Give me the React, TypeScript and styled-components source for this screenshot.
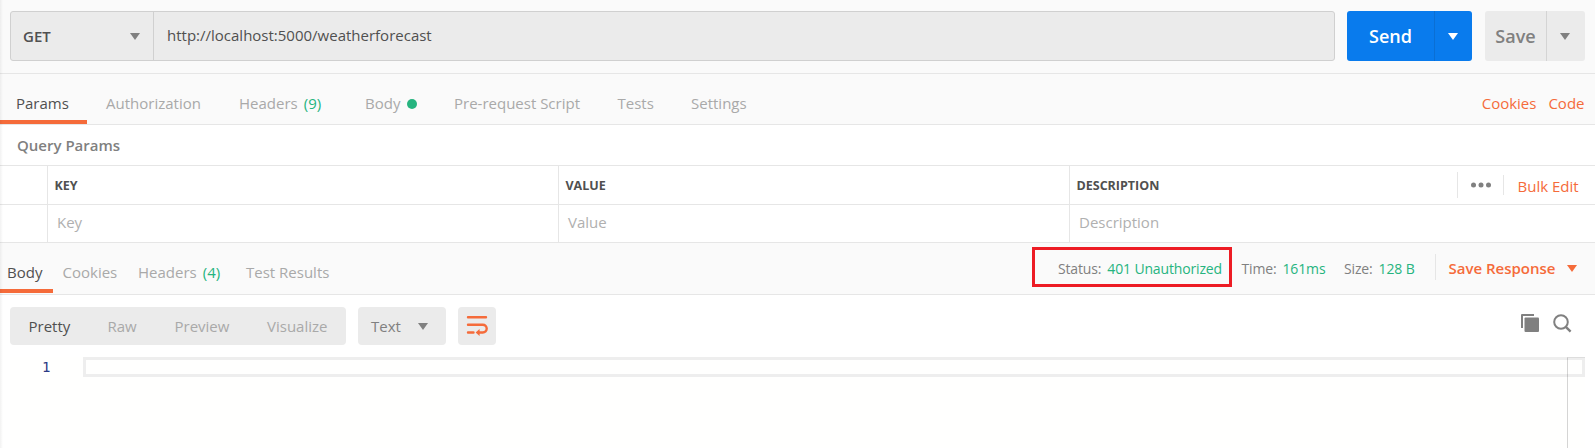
import React from "react";
import styled, { createGlobalStyle, css } from "styled-components";

const GlobalStyle = createGlobalStyle`
  *, *::before, *::after { box-sizing: border-box; }
  html, body { margin: 0; height: 100%; }
  body {
    overflow: hidden;
    background: #fff;
    color: #505050;
    font-family: "Open Sans", "Noto Sans", sans-serif;
    font-size: 15px;
  }
`;

const Page = styled.main`
  position: relative;
  display: flex;
  flex-direction: column;
  width: 1595px;
  height: 448px;
  overflow: hidden;
  white-space: nowrap;
`;

const EdgeShadow = styled.div`
  position: absolute;
  inset: 0 auto 0 0;
  width: 3px;
  background: linear-gradient(to right, rgba(0, 0, 0, 0.05), transparent);
  pointer-events: none;
`;

const RequestBar = styled.header`
  display: flex;
  height: 74px;
  padding: 11px 10px 0;
  background: #fafafa;
  border-bottom: 1px solid #e6e6e6;
`;

const UrlGroup = styled.div`
  display: flex;
  width: 1325px;
  height: 50px;
  margin-right: 12px;
  background: #ebebeb;
  border: 1px solid #d0d0d0;
  border-radius: 3px;
`;

const MethodSelect = styled.div`
  display: flex;
  align-items: center;
  justify-content: space-between;
  width: 143px;
  padding: 0 13px 0 12px;
  border-right: 1px solid #d0d0d0;
  font-weight: 600;
`;

const UrlField = styled.div`
  padding-left: 13px;
  line-height: 47px;
`;

const Caret = styled.svg`
  display: block;
  flex: none;
  width: 10px;
  height: 7px;
  fill: currentColor;
`;

const GreyCaret = styled.span`
  color: #808080;
`;

const SplitButton = styled.div<{ $primary?: boolean }>`
  display: flex;
  width: ${(p) => (p.$primary ? 125 : 100)}px;
  height: 50px;
  margin-right: ${(p) => (p.$primary ? 13 : 0)}px;
  border-radius: 3px;
  font-size: 18px;
  font-weight: 600;
  color: ${(p) => (p.$primary ? "#fff" : "#808080")};
  background: ${(p) => (p.$primary ? "#097bed" : "#ebebeb")};
`;

const ButtonLabel = styled.span<{ $width: number }>`
  display: flex;
  align-items: center;
  justify-content: center;
  width: ${(p) => p.$width}px;
`;

const ButtonToggle = styled.span<{ $line: string }>`
  display: flex;
  flex: 1;
  align-items: center;
  padding-left: 13px;
  border-left: 1px solid ${(p) => p.$line};
`;

const TabBar = styled.nav`
  display: flex;
  height: 51px;
  background: #fafafa;
  border-bottom: 1px solid #e6e6e6;
`;

const Tab = styled.div<{ $width: number; $pad: number; $active?: boolean }>`
  display: flex;
  align-items: center;
  width: ${(p) => p.$width}px;
  height: 50px;
  padding: 8px 0 0 ${(p) => p.$pad}px;
  color: #a9a9a9;
  ${(p) =>
    p.$active &&
    css`
      color: #505050;
      box-shadow: inset 0 -4px #f56b3a;
    `}
`;

const Count = styled.span`
  margin-left: 6px;
  color: #26b47f;
`;

const Dot = styled.span`
  width: 10px;
  height: 10px;
  margin: 1px 0 0 7px;
  border-radius: 50%;
  background: #26b47f;
`;

const TabLinks = styled.div`
  display: flex;
  gap: 12px;
  margin-left: auto;
  padding: 8px 10.5px 0 0;
  align-items: center;
  color: #f56b3a;
`;

const SectionTitle = styled.h2`
  height: 41px;
  margin: 0;
  padding-left: 17px;
  border-bottom: 1px solid #e6e6e6;
  font-size: 15px;
  font-weight: 600;
  line-height: 41px;
  color: #808080;
`;

const ParamRow = styled.div<{ $head?: boolean }>`
  display: grid;
  grid-template-columns: 47px 511px 511px 1fr;
  height: ${(p) => (p.$head ? 39 : 38)}px;
  border-bottom: 1px solid #e6e6e6;
  color: ${(p) => (p.$head ? "#505050" : "#b0b0b0")};
  font-size: ${(p) => (p.$head ? 12.5 : 15)}px;
  font-weight: ${(p) => (p.$head ? 700 : 400)};
`;

const Cell = styled.div<{ $head?: boolean }>`
  display: flex;
  align-items: center;
  padding: ${(p) => (p.$head ? "0 0 0 6.5px" : "0 0 3px 9px")};
  border-left: 1px solid #e6e6e6;
`;

const HeadActions = styled.div`
  display: flex;
  align-items: center;
  height: 100%;
  margin-left: auto;
`;

const MoreButton = styled.span`
  display: flex;
  align-items: center;
  justify-content: center;
  width: 46px;
  height: 26px;
  border-left: 1px solid #e6e6e6;
  color: #808080;
`;

const BulkEdit = styled.span`
  display: flex;
  align-items: center;
  width: 92px;
  height: 20px;
  padding: 2px 0 0 13.5px;
  border-left: 1px solid #e6e6e6;
  color: #f56b3a;
  font-size: 15px;
  font-weight: 400;
`;

const ResponseBar = styled(TabBar)`
  height: 52px;
`;

const ResponseMeta = styled.div`
  display: flex;
  align-items: center;
  height: 40px;
  margin: 4px 0 0 auto;
  font-size: 14px;
  letter-spacing: -0.15px;
  color: #808080;
`;

const StatusFrame = styled.div`
  display: flex;
  align-items: center;
  width: 200px;
  height: 40px;
  margin-right: 9.5px;
  padding: 2px 0 0 23px;
  border: 3px solid #ed1c24;
`;

const MetaItem = styled.div<{ $width: number }>`
  width: ${(p) => p.$width}px;
  padding-top: 2px;
`;

const MetaValue = styled.span`
  margin-left: 6px;
  color: #26b47f;
`;

const SaveResponse = styled.div`
  display: flex;
  align-items: center;
  justify-content: space-between;
  width: 160px;
  height: 26px;
  padding: 2px 18px 0 12.5px;
  border-left: 1px solid #e6e6e6;
  font-size: 15px;
  font-weight: 600;
  letter-spacing: 0;
  color: #f56b3a;
`;

const Toolbar = styled.div`
  display: flex;
  height: 62px;
  padding: 12px 10px 0;
`;

const ToolGroup = styled.div<{ $width: number }>`
  display: flex;
  align-items: center;
  width: ${(p) => p.$width}px;
  height: 38px;
  margin-right: 12px;
  border-radius: 4px;
  background: #ebebeb;
  color: #808080;
`;

const ViewMode = styled.span<{ $width: number; $active?: boolean }>`
  width: ${(p) => p.$width}px;
  color: ${(p) => (p.$active ? "#505050" : "#a9a9a9")};
`;

const ModeGroup = styled(ToolGroup)`
  padding-left: 18.5px;
`;

const FormatSelect = styled(ToolGroup)`
  justify-content: space-between;
  padding: 0 18px 0 13px;
`;

const WrapButton = styled(ToolGroup)`
  justify-content: center;
`;

const ToolIcons = styled.div`
  display: flex;
  gap: 14px;
  margin: 7px 13px 0 auto;
`;

const Editor = styled.div`
  position: relative;
  display: flex;
  flex: 1;
  margin: 0 10px;
  background: #fffffe;
`;

const LineNumber = styled.div`
  width: 73px;
  padding-left: 32px;
  font-family: "DejaVu Sans Mono", monospace;
  font-size: 14px;
  line-height: 20px;
  color: #2b3a85;
`;

const ActiveLine = styled.div`
  flex: 1;
  height: 20px;
  border: 3px solid #eee;
`;

const OverviewRuler = styled.div`
  position: absolute;
  inset: 0 0 0 auto;
  width: 18px;
  border-left: 1px solid rgba(0, 0, 0, 0.16);
  border-top: 1px solid rgba(0, 0, 0, 0.07);
`;

const Down = () => (
  <Caret viewBox="0 0 10 7">
    <path d="M0 0h10L5 7z" />
  </Caret>
);

export default function App() {
  return (
    <>
      <GlobalStyle />
      <Page>
        <RequestBar>
          <UrlGroup>
            <MethodSelect>GET<GreyCaret><Down /></GreyCaret></MethodSelect>
            <UrlField>http://localhost:5000/weatherforecast</UrlField>
          </UrlGroup>
          <SplitButton $primary>
            <ButtonLabel $width={87}>Send</ButtonLabel>
            <ButtonToggle $line="#0a6fd4"><Down /></ButtonToggle>
          </SplitButton>
          <SplitButton>
            <ButtonLabel $width={61}>Save</ButtonLabel>
            <ButtonToggle $line="#d4d4d4"><Down /></ButtonToggle>
          </SplitButton>
        </RequestBar>

        <TabBar>
          <Tab $width={87} $pad={16} $active>Params</Tab>
          <Tab $width={134} $pad={19}>Authorization</Tab>
          <Tab $width={126} $pad={18}>Headers<Count>(9)</Count></Tab>
          <Tab $width={89} $pad={18}>Body<Dot /></Tab>
          <Tab $width={164} $pad={18}>Pre-request Script</Tab>
          <Tab $width={73} $pad={17.5}>Tests</Tab>
          <Tab $width={90} $pad={18}>Settings</Tab>
          <TabLinks><span>Cookies</span><span>Code</span></TabLinks>
        </TabBar>

        <SectionTitle>Query Params</SectionTitle>
        <ParamRow $head>
          <span />
          <Cell $head>KEY</Cell>
          <Cell $head>VALUE</Cell>
          <Cell $head>
            DESCRIPTION
            <HeadActions>
              <MoreButton>
                <svg width="20" height="6" viewBox="0 0 20 6" fill="currentColor">
                  <circle cx="2.5" cy="3" r="2.5" />
                  <circle cx="10" cy="3" r="2.5" />
                  <circle cx="17.5" cy="3" r="2.5" />
                </svg>
              </MoreButton>
              <BulkEdit>Bulk Edit</BulkEdit>
            </HeadActions>
          </Cell>
        </ParamRow>
        <ParamRow>
          <span />
          <Cell>Key</Cell>
          <Cell>Value</Cell>
          <Cell>Description</Cell>
        </ParamRow>

        <ResponseBar>
          <Tab $width={53} $pad={7} $active>Body</Tab>
          <Tab $width={75} $pad={9.5}>Cookies</Tab>
          <Tab $width={108} $pad={10}>Headers<Count>(4)</Count></Tab>
          <Tab $width={110} $pad={10}>Test Results</Tab>
          <ResponseMeta>
            <StatusFrame>
              <span>Status:<MetaValue>401 Unauthorized</MetaValue></span>
            </StatusFrame>
            <MetaItem $width={102.5}>Time:<MetaValue>161ms</MetaValue></MetaItem>
            <MetaItem $width={91}>Size:<MetaValue>128 B</MetaValue></MetaItem>
            <SaveResponse>Save Response<Down /></SaveResponse>
          </ResponseMeta>
        </ResponseBar>

        <Toolbar>
          <ModeGroup $width={336}>
            <ViewMode $width={79} $active>Pretty</ViewMode>
            <ViewMode $width={67}>Raw</ViewMode>
            <ViewMode $width={92.5}>Preview</ViewMode>
            <ViewMode $width={70}>Visualize</ViewMode>
          </ModeGroup>
          <FormatSelect $width={88}>Text<Down /></FormatSelect>
          <WrapButton $width={38}>
            <svg width="22" height="22" viewBox="0 0 22 22" fill="none" stroke="#f56b3a" strokeWidth="2.4" strokeLinecap="round">
              <path d="M2 2.2h18M2 9.7h14.8a3.9 3.9 0 0 1 0 7.8H13M2 17.5h5.5" />
              <path d="M13.6 14v7l-4-3.5z" fill="#f56b3a" stroke="none" />
            </svg>
          </WrapButton>
          <ToolIcons>
            <svg width="18" height="18" viewBox="0 0 18 18" fill="#808080">
              <path d="M0 1a1 1 0 0 1 1-1h12v2H2v12H0z" />
              <rect x="3.5" y="3.5" width="14.5" height="14.5" rx="1" />
            </svg>
            <svg width="19" height="19" viewBox="0 0 19 19" fill="none" stroke="#808080" strokeWidth="2">
              <circle cx="8" cy="8" r="6.8" />
              <path d="M12.8 12.8l4.8 4.8" strokeWidth="2.4" />
            </svg>
          </ToolIcons>
        </Toolbar>

        <Editor>
          <LineNumber>1</LineNumber>
          <ActiveLine />
          <OverviewRuler />
        </Editor>
        <EdgeShadow />
      </Page>
    </>
  );
}
